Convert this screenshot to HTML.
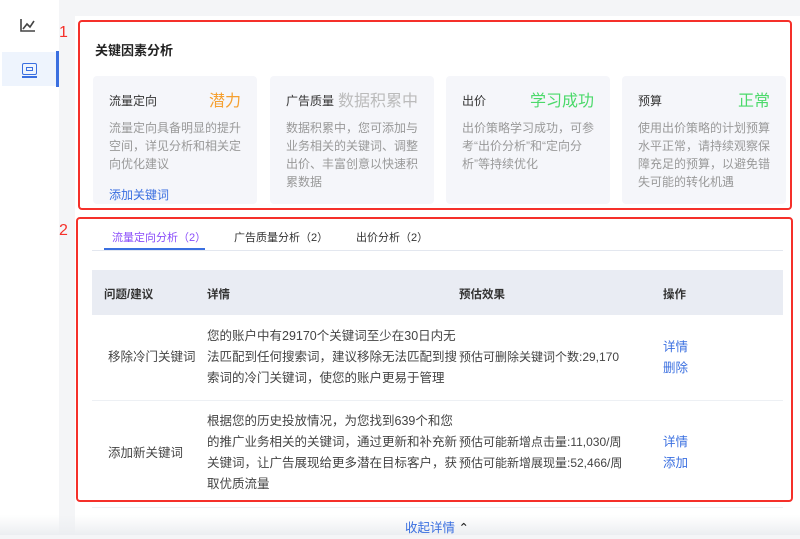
<!DOCTYPE html>
<html><head><meta charset="utf-8"><style>
*{margin:0;padding:0;box-sizing:border-box}
body{width:800px;height:535px;overflow:hidden;background:#f4f5f7;font-family:"Liberation Sans","Noto Sans CJK SC",sans-serif;position:relative;color:#333}
.abs{position:absolute}
.side{left:0;top:0;width:59px;height:535px;background:#fff}
.main{left:75px;top:16px;width:725px;height:519px;background:#fff}
.red{position:absolute;border:2px solid #f5302a;border-radius:4px}
.card{position:absolute;top:76px;width:164px;height:128px;background:#f5f6fa;border-radius:4px}
.card .t{position:absolute;left:16px;top:16px;font-size:12px;color:#333}
.card .s{position:absolute;right:16px;top:11px;font-size:16px}
.card .d{position:absolute;left:16px;top:43px;width:134px;font-size:12px;line-height:18px;color:#999}
.num{font-size:16px;color:#f5302a}
.tab{position:absolute;top:229px;font-size:11px;color:#333}
.th{position:absolute;top:286px;font-size:11.5px;color:#333;font-weight:bold}
.cell{position:absolute;font-size:12.5px;line-height:21px;color:#444}
.est{font-size:12px}
.lk{color:#3a6fe0}
</style></head><body>
<div class="abs side"></div>
<div class="abs" style="left:17px;top:16px;width:22px;height:20px">
<svg width="22" height="20" viewBox="0 0 22 20"><path d="M4 3V15H18" stroke="#444" stroke-width="1.6" fill="none"/><path d="M6 13L10 8L13 11L17 5" stroke="#444" stroke-width="1.6" fill="none"/></svg></div>
<div class="abs" style="left:2px;top:52px;width:56px;height:34px;background:#eef4fd"></div>
<div class="abs" style="left:56px;top:51px;width:3px;height:36px;background:#3a6fe0"></div>
<div class="abs" style="left:22px;top:63px;width:15px;height:12px;border:1.8px solid #3a6fe0;border-radius:2px"></div>
<div class="abs" style="left:22px;top:76px;width:15px;height:2px;background:#3a6fe0"></div>
<div class="abs" style="left:26px;top:67px;width:7px;height:4px;border:1.5px solid #3a6fe0"></div>
<div class="abs main"></div>
<div class="abs" style="left:0;top:515px;width:800px;height:20px;background:linear-gradient(#fff0,#eceef1)"></div>
<div class="red" style="left:78px;top:20px;width:714px;height:190px"></div>
<div class="red" style="left:76px;top:217px;width:717px;height:285px"></div>
<div class="abs num" style="left:59px;top:24px">1</div>
<div class="abs num" style="left:59px;top:222px">2</div>
<div class="abs" style="left:95px;top:40px;font-size:13px;font-weight:bold;color:#222">关键因素分析</div>
<div class="card" style="left:93px"><div class="t">流量定向</div><div class="s" style="color:#f5a030">潜力</div><div class="d">流量定向具备明显的提升空间，详见分析和相关定向优化建议</div><div class="abs lk" style="left:16px;top:110px;font-size:12px">添加关键词</div></div>
<div class="card" style="left:270px"><div class="t">广告质量</div><div class="s" style="color:#bbb">数据积累中</div><div class="d">数据积累中，您可添加与业务相关的关键词、调整出价、丰富创意以快速积累数据</div></div>
<div class="card" style="left:446px"><div class="t">出价</div><div class="s" style="color:#4bd96a">学习成功</div><div class="d">出价策略学习成功，可参考“出价分析”和“定向分析”等持续优化</div></div>
<div class="card" style="left:622px"><div class="t">预算</div><div class="s" style="color:#4bd96a">正常</div><div class="d">使用出价策略的计划预算水平正常，请持续观察保障充足的预算，以避免错失可能的转化机遇</div></div>
<div class="tab" style="left:112px;color:#8a4dfa">流量定向分析（2）</div>
<div class="tab" style="left:234px">广告质量分析（2）</div>
<div class="tab" style="left:356px">出价分析（2）</div>
<div class="abs" style="left:92px;top:250px;width:691px;height:1px;background:#e3e7ef"></div>
<div class="abs" style="left:104px;top:248px;width:101px;height:2px;background:#3a6fe0"></div>
<div class="abs" style="left:92px;top:270px;width:691px;height:45px;background:#e9ecf3"></div>
<div class="th" style="left:104px">问题/建议</div><div class="th" style="left:207px">详情</div><div class="th" style="left:459px">预估效果</div><div class="th" style="left:663px">操作</div>
<div class="abs" style="left:92px;top:400px;width:691px;height:1px;background:#edf0f4"></div>
<div class="abs" style="left:92px;top:507px;width:691px;height:1px;background:#edf0f4"></div>
<div class="cell" style="left:108px;top:347px">移除冷门关键词</div>
<div class="cell" style="left:207px;top:326px;width:250px">您的账户中有29170个关键词至少在30日内无法匹配到任何搜索词，建议移除无法匹配到搜索词的冷门关键词，使您的账户更易于管理</div>
<div class="cell est" style="left:459px;top:347px">预估可删除关键词个数:29,170</div>
<div class="cell lk" style="left:663px;top:337px">详情<br>删除</div>
<div class="cell" style="left:108px;top:443px">添加新关键词</div>
<div class="cell" style="left:207px;top:411px;width:250px">根据您的历史投放情况，为您找到639个和您的推广业务相关的关键词，通过更新和补充新关键词，让广告展现给更多潜在目标客户，获取优质流量</div>
<div class="cell est" style="left:459px;top:432px">预估可能新增点击量:11,030/周<br>预估可能新增展现量:52,466/周</div>
<div class="cell lk" style="left:663px;top:432px">详情<br>添加</div>
<div class="cell lk" style="left:405px;top:518px">收起详情 <span style="color:#222">⌃</span></div>
</body></html>
